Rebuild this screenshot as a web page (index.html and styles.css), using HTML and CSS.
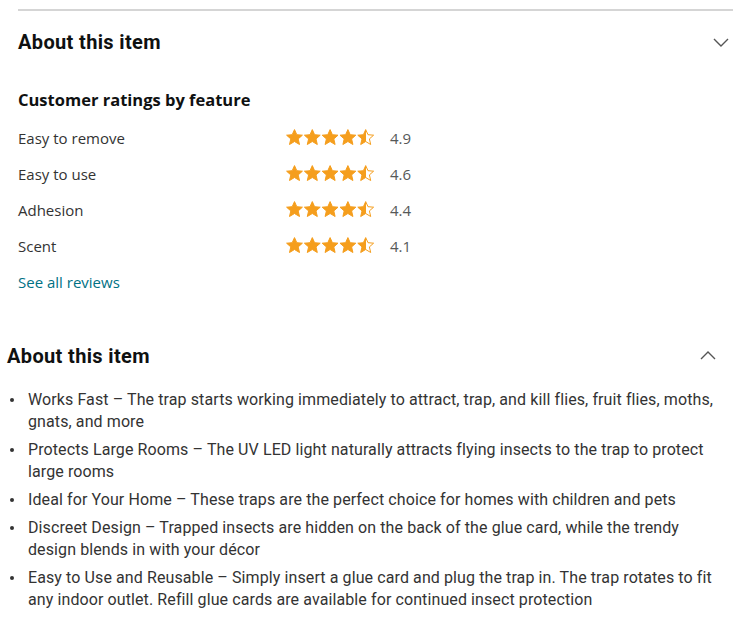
FILE: index.html
```html
<!DOCTYPE html>
<html>
<head>
<meta charset="utf-8">
<link rel="stylesheet" href="styles.css">
</head>
<body>
<div class="page">
  <section class="top">
    <hr class="divider">
    <div class="head-row">
      <h2 class="heading">About this item</h2>
      <svg class="chev" width="18" height="12" viewBox="0 0 18 12"><path d="M2 3l7 7 7-7" fill="none" stroke="#555" stroke-width="1.4"/></svg>
    </div>
    <h3 class="sub">Customer ratings by feature</h3>
    <div class="ratings">
      <div class="rrow"><span class="label">Easy to remove</span>
        <svg class="stars" width="90" height="18" viewBox="0 0 90 18"><defs><linearGradient id="h1"><stop offset="50%" stop-color="#f59e1d"/><stop offset="50%" stop-color="#fff"/></linearGradient></defs>
          <g stroke="#f59e1d" stroke-width="1" stroke-linejoin="round">
          <path transform="translate(0 0)" d="M8.5 0.6l2.3 5.1 5.6.5-4.2 3.7 1.3 5.6-5-3-5 3 1.3-5.6-4.2-3.7 5.6-.5z" fill="#f59e1d"/>
          <path transform="translate(17.8 0)" d="M8.5 0.6l2.3 5.1 5.6.5-4.2 3.7 1.3 5.6-5-3-5 3 1.3-5.6-4.2-3.7 5.6-.5z" fill="#f59e1d"/>
          <path transform="translate(35.6 0)" d="M8.5 0.6l2.3 5.1 5.6.5-4.2 3.7 1.3 5.6-5-3-5 3 1.3-5.6-4.2-3.7 5.6-.5z" fill="#f59e1d"/>
          <path transform="translate(53.4 0)" d="M8.5 0.6l2.3 5.1 5.6.5-4.2 3.7 1.3 5.6-5-3-5 3 1.3-5.6-4.2-3.7 5.6-.5z" fill="#f59e1d"/>
          <path transform="translate(71.2 0)" d="M8.5 0.6l2.3 5.1 5.6.5-4.2 3.7 1.3 5.6-5-3-5 3 1.3-5.6-4.2-3.7 5.6-.5z" fill="url(#h1)"/>
          </g></svg>
        <span class="num">4.9</span></div>
      <div class="rrow"><span class="label">Easy to use</span>
        <svg class="stars" width="90" height="18" viewBox="0 0 90 18"><defs><linearGradient id="h2"><stop offset="50%" stop-color="#f59e1d"/><stop offset="50%" stop-color="#fff"/></linearGradient></defs>
          <g stroke="#f59e1d" stroke-width="1" stroke-linejoin="round">
          <path transform="translate(0 0)" d="M8.5 0.6l2.3 5.1 5.6.5-4.2 3.7 1.3 5.6-5-3-5 3 1.3-5.6-4.2-3.7 5.6-.5z" fill="#f59e1d"/>
          <path transform="translate(17.8 0)" d="M8.5 0.6l2.3 5.1 5.6.5-4.2 3.7 1.3 5.6-5-3-5 3 1.3-5.6-4.2-3.7 5.6-.5z" fill="#f59e1d"/>
          <path transform="translate(35.6 0)" d="M8.5 0.6l2.3 5.1 5.6.5-4.2 3.7 1.3 5.6-5-3-5 3 1.3-5.6-4.2-3.7 5.6-.5z" fill="#f59e1d"/>
          <path transform="translate(53.4 0)" d="M8.5 0.6l2.3 5.1 5.6.5-4.2 3.7 1.3 5.6-5-3-5 3 1.3-5.6-4.2-3.7 5.6-.5z" fill="#f59e1d"/>
          <path transform="translate(71.2 0)" d="M8.5 0.6l2.3 5.1 5.6.5-4.2 3.7 1.3 5.6-5-3-5 3 1.3-5.6-4.2-3.7 5.6-.5z" fill="url(#h2)"/>
          </g></svg>
        <span class="num">4.6</span></div>
      <div class="rrow"><span class="label">Adhesion</span>
        <svg class="stars" width="90" height="18" viewBox="0 0 90 18"><defs><linearGradient id="h3"><stop offset="50%" stop-color="#f59e1d"/><stop offset="50%" stop-color="#fff"/></linearGradient></defs>
          <g stroke="#f59e1d" stroke-width="1" stroke-linejoin="round">
          <path transform="translate(0 0)" d="M8.5 0.6l2.3 5.1 5.6.5-4.2 3.7 1.3 5.6-5-3-5 3 1.3-5.6-4.2-3.7 5.6-.5z" fill="#f59e1d"/>
          <path transform="translate(17.8 0)" d="M8.5 0.6l2.3 5.1 5.6.5-4.2 3.7 1.3 5.6-5-3-5 3 1.3-5.6-4.2-3.7 5.6-.5z" fill="#f59e1d"/>
          <path transform="translate(35.6 0)" d="M8.5 0.6l2.3 5.1 5.6.5-4.2 3.7 1.3 5.6-5-3-5 3 1.3-5.6-4.2-3.7 5.6-.5z" fill="#f59e1d"/>
          <path transform="translate(53.4 0)" d="M8.5 0.6l2.3 5.1 5.6.5-4.2 3.7 1.3 5.6-5-3-5 3 1.3-5.6-4.2-3.7 5.6-.5z" fill="#f59e1d"/>
          <path transform="translate(71.2 0)" d="M8.5 0.6l2.3 5.1 5.6.5-4.2 3.7 1.3 5.6-5-3-5 3 1.3-5.6-4.2-3.7 5.6-.5z" fill="url(#h3)"/>
          </g></svg>
        <span class="num">4.4</span></div>
      <div class="rrow"><span class="label">Scent</span>
        <svg class="stars" width="90" height="18" viewBox="0 0 90 18"><defs><linearGradient id="h4"><stop offset="50%" stop-color="#f59e1d"/><stop offset="50%" stop-color="#fff"/></linearGradient></defs>
          <g stroke="#f59e1d" stroke-width="1" stroke-linejoin="round">
          <path transform="translate(0 0)" d="M8.5 0.6l2.3 5.1 5.6.5-4.2 3.7 1.3 5.6-5-3-5 3 1.3-5.6-4.2-3.7 5.6-.5z" fill="#f59e1d"/>
          <path transform="translate(17.8 0)" d="M8.5 0.6l2.3 5.1 5.6.5-4.2 3.7 1.3 5.6-5-3-5 3 1.3-5.6-4.2-3.7 5.6-.5z" fill="#f59e1d"/>
          <path transform="translate(35.6 0)" d="M8.5 0.6l2.3 5.1 5.6.5-4.2 3.7 1.3 5.6-5-3-5 3 1.3-5.6-4.2-3.7 5.6-.5z" fill="#f59e1d"/>
          <path transform="translate(53.4 0)" d="M8.5 0.6l2.3 5.1 5.6.5-4.2 3.7 1.3 5.6-5-3-5 3 1.3-5.6-4.2-3.7 5.6-.5z" fill="#f59e1d"/>
          <path transform="translate(71.2 0)" d="M8.5 0.6l2.3 5.1 5.6.5-4.2 3.7 1.3 5.6-5-3-5 3 1.3-5.6-4.2-3.7 5.6-.5z" fill="url(#h4)"/>
          </g></svg>
        <span class="num">4.1</span></div>
    </div>
    <a class="see-all" href="#">See all reviews</a>
  </section>

  <section class="bottom">
    <div class="head-row head-row2">
      <h2 class="heading">About this item</h2>
      <svg class="chev" width="18" height="12" viewBox="0 0 18 12"><path d="M2 9l7-7 7 7" fill="none" stroke="#555" stroke-width="1.4"/></svg>
    </div>
    <ul class="bullets">
      <li>Works Fast – The trap starts working immediately to attract, trap, and kill flies, fruit flies, moths, gnats, and more</li>
      <li>Protects Large Rooms – The UV LED light naturally attracts flying insects to the trap to protect large rooms</li>
      <li>Ideal for Your Home – These traps are the perfect choice for homes with children and pets</li>
      <li>Discreet Design – Trapped insects are hidden on the back of the glue card, while the trendy design blends in with your décor</li>
      <li>Easy to Use and Reusable – Simply insert a glue card and plug the trap in. The trap rotates to fit any indoor outlet. Refill glue cards are available for continued insect protection</li>
    </ul>
  </section>
</div>
</body>
</html>
```

FILE: styles.css
```css
* { box-sizing: border-box; }
html, body { margin: 0; padding: 0; background: #fff; }
body { width: 736px; height: 623px; overflow: hidden; font-family: "Open Sans", sans-serif; color: #333; }

.top { padding: 9px 3px 0 18px; }
.divider { border: 0; border-top: 2px solid #d5d5d5; margin: 0; }

.head-row { display: flex; align-items: center; justify-content: space-between; height: 28px; margin-top: 17px; padding-right: 3px; }
.heading { margin: 0; font-family: Roboto, sans-serif; font-weight: 700; font-size: 20px; letter-spacing: 0.35px; color: #0f1111; }
.chev { display: block; }

.sub { margin: 33px 0 0 0; font-family: "Open Sans", sans-serif; font-weight: 700; font-size: 16.5px; line-height: 22px; color: #0f1111; }

.ratings { display: flex; flex-direction: column; margin-top: 9px; }
.rrow { display: grid; grid-template-columns: 254px 90px auto; column-gap: 14px; align-items: center; height: 36px; }
.label { font-size: 15px; color: #333; }
.stars { display: block; }
.num { font-size: 15px; color: #565959; }

.see-all { display: block; margin-top: 0; font-size: 15px; line-height: 36px; color: #007185; text-decoration: none; }

.bottom { padding: 0 19px 0 7px; margin-top: 42px; }
.head-row2 { margin-top: 0; padding-right: 0; }
.bullets { list-style: none; margin: 19px 0 0 0; padding: 0 0 0 21px; font-family: Roboto, sans-serif; font-size: 16px; line-height: 22px; color: #333; letter-spacing: 0.1px; }
.bullets li { position: relative; margin-bottom: 6px; }
.bullets li::before { content: ""; position: absolute; left: -18px; top: 9px; width: 4px; height: 4px; border-radius: 50%; background: #333; }
```
